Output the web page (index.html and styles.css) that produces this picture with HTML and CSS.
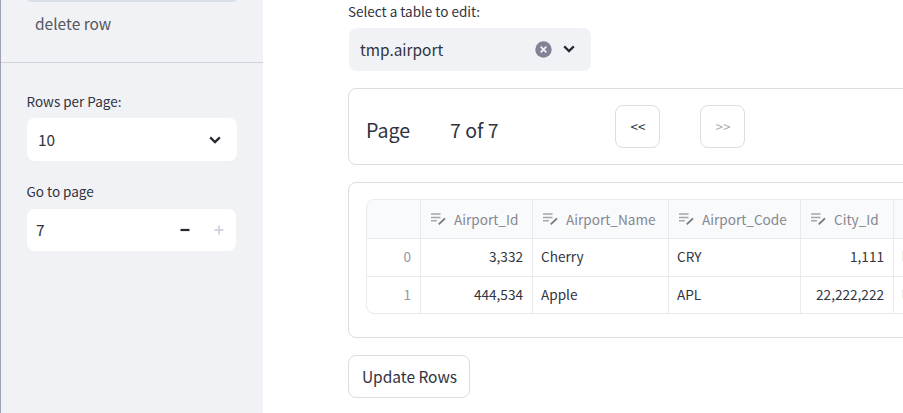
FILE: index.html
```
<!DOCTYPE html>
<html lang="en">
<head>
<meta charset="utf-8">
<title>Table editor</title>
<link rel="stylesheet" href="styles.css">
</head>
<body>
<svg class="defs" width="0" height="0" aria-hidden="true">
  <symbol id="edit" viewBox="0 0 16 14"><path d="M1 2h9.5M1 5.4h9.5M1 8.8h6" fill="none" stroke="#a5a7ad" stroke-width="1.5"/><path d="M8.7 12.4 15 6.4" fill="none" stroke="#777980" stroke-width="1.9"/></symbol>
  <symbol id="chevron" viewBox="0 0 12 8"><path d="M1.2 1.4 6 6.1l4.8-4.7" fill="none" stroke="#262730" stroke-width="2.2"/></symbol>
</svg>
<div class="app">
  <aside class="sidebar">
    <div class="menu">
      <div class="menu-active"></div>
      <div class="menu-item">delete row</div>
    </div>
    <div class="fields">
      <label class="label">Rows per Page:</label>
      <div class="field select"><span>10</span><svg class="chevron"><use href="#chevron"/></svg></div>
      <label class="label label-page">Go to page</label>
      <div class="field number"><span>7</span><svg class="step" viewBox="0 0 10 10"><path d="M.5 5h9" stroke="#262730" stroke-width="2.2"/></svg><svg class="step" viewBox="0 0 10 10"><path d="M.5 5h9M5 .5v9" stroke="#d3d5df" stroke-width="2"/></svg></div>
    </div>
  </aside>
  <main class="main">
    <label class="label">Select a table to edit:</label>
    <div class="field table-select"><span>tmp.airport</span>
      <svg class="clear" viewBox="0 0 17 17"><circle cx="8.5" cy="8.5" r="8.2" fill="#808395"/><path d="m5.7 5.7 5.6 5.6m0-5.6-5.6 5.6" stroke="#f0f2f6" stroke-width="1.8"/></svg>
      <svg class="chevron"><use href="#chevron"/></svg>
    </div>
    <section class="card pager">
      <span class="page-word">Page</span><span class="page-count">7 of 7</span>
      <button class="button nav">&lt;&lt;</button><button class="button nav" disabled>&gt;&gt;</button>
    </section>
    <section class="card data">
      <div class="grid">
        <div class="row head">
          <div></div>
          <div><svg class="edit"><use href="#edit"/></svg><span>Airport_Id</span></div>
          <div><svg class="edit"><use href="#edit"/></svg><span>Airport_Name</span></div>
          <div><svg class="edit"><use href="#edit"/></svg><span>Airport_Code</span></div>
          <div><svg class="edit"><use href="#edit"/></svg><span>City_Id</span></div>
          <div></div>
        </div>
        <div class="row">
          <div class="index">0</div><div class="num">3,332</div><div>Cherry</div><div>CRY</div><div class="num">1,111</div><div><i class="clip"></i></div>
        </div>
        <div class="row">
          <div class="index">1</div><div class="num">444,534</div><div>Apple</div><div>APL</div><div class="num">22,222,222</div><div><i class="clip"></i></div>
        </div>
      </div>
    </section>
    <button class="button update">Update Rows</button>
  </main>
</div>
</body>
</html>
```
FILE: styles.css
```
* { box-sizing: border-box; }
body { margin: 0; overflow: hidden; background: #fff; color: #31333f; font: 15.4px/24px "Noto Sans CJK SC", "Noto Sans", sans-serif; }
.defs { display: block; }
.app { display: flex; width: 903px; height: 413px; overflow: hidden; }
.sidebar { flex: 0 0 263px; background: #f0f2f6; border-left: 1px solid #9ba3b3; }
.menu { height: 63px; border-bottom: 1px solid #d0d3d9; padding: 0 27px; }
.menu-active { height: 2px; background: #d9dfe8; border-radius: 0 0 8px 8px; }
.menu-item { padding: 9px 7px 0; color: #555761; font-size: 15.5px; }
.fields { padding: 28px 26px 0 25.5px; }
.label { display: block; font-size: 13.5px; line-height: 20px; }
.field { display: flex; align-items: center; border-radius: 8px; background: #fff; }
.field span { flex: 1; padding-bottom: 2px; }
.select { height: 43px; margin-top: 7px; padding: 0 16px 0 11.5px; }
.chevron { width: 12px; height: 8px; }
.label-page { margin-top: 20px; }
.number { height: 42px; margin: 8px 1px 0 0; padding: 0 12px 0 9.5px; }
.step { width: 10px; height: 10px; }
.step + .step { margin-left: 24px; }
.main { flex: 1; min-width: 0; padding: 1px 0 0 85px; }
.table-select { width: 242.5px; height: 43px; margin: 7px 0 0 0.5px; padding: 0 16px 0 11.5px; background: #f0f2f6; }
.clear { width: 17px; height: 17px; margin-right: 11px; }
.table-select svg { position: relative; top: -0.5px; }
.card { width: 600px; border: 1px solid #dcdde0; border-radius: 8px; }
.pager { display: flex; height: 77px; margin-top: 17px; padding: 16px 17px; font-size: 19.6px; line-height: 50px; }
.page-word { width: 84px; }
.page-count { width: 165px; font-size: 19.5px; }
.button { height: 43px; padding: 0; border: 1px solid #dcdde0; border-radius: 8px; background: #fff; color: #31333f; font: inherit; font-size: 15.5px; line-height: 24px; }
.nav { width: 45px; margin-right: 40px; padding: 0 0 1px 1px; font-size: 13.5px; }
.nav:disabled { color: #adadb2; }
.data { height: 156px; margin-top: 17px; padding: 16px 17px; }
.grid { width: 640px; border: 1px solid #e9eaed; border-radius: 8px; overflow: hidden; font-size: 13.6px; }
.row { display: grid; grid-template-columns: 54px 112px 136px 132px 93px 1fr; height: 37.5px; border-top: 1px solid #e9eaed; }
.row > div { display: flex; align-items: center; padding: 0 9px 2px 8px; border-right: 1px solid #e9eaed; }
.row.head { height: 38px; border-top: 0; background: #f9fafc; color: #85878f; }
.head > div { padding: 0 9px; }
.edit { width: 16px; height: 14px; margin-right: 8px; }
.row > .num { justify-content: flex-end; }
.row > .index { justify-content: flex-end; color: #95979f; }
.clip { width: 2px; height: 10px; background: #eeeee9; }
.update { display: block; width: 122px; margin-top: 17px; padding: 0 0 1px 1px; }
```
